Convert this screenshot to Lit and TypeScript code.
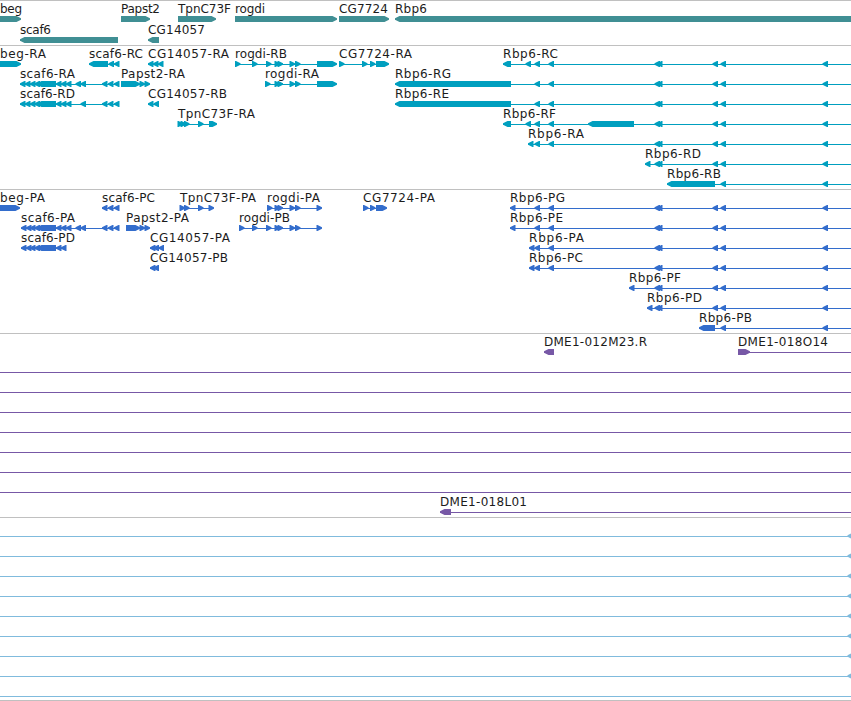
import { css, html, LitElement, svg } from 'lit';

import { customElement, property } from 'lit/decorators.js';

// [start, end] of a block, or a single tip position for a small arrow
type Block = [number, number] | number;

interface Feature {
  label?: string;
  x: number;
  width?: number;
  dir: 'left' | 'right';
  blocks: Block[];
  lineTo?: number;
}

interface Track {
  kind: string;
  rows: Feature[][];
}

const WIDTH = 851;
const HEAD = 5;

const left = (label: string, x: number, width: number, blocks: Block[], lineTo?: number): Feature =>
  ({ label, x, width, dir: 'left', blocks, lineTo });
const right = (label: string, x: number, width: number, blocks: Block[], lineTo?: number): Feature =>
  ({ label, x, width, dir: 'right', blocks, lineTo });
const line = (blocks: Block[] = []): Feature => ({ x: 0, dir: 'left', blocks, lineTo: WIDTH });

// exons shared by the Rbp6 isoforms
const far: Block[] = [712.5, 720.5, 822.5];
const tail: Block[] = [654.5, 657, ...far];

const scaf6: Block[] = [20, 25, 30, 34.5, [37, 56], 56, 61, 66];
const scaf6P: Block[] = [21, 26, 30, 34.5, [37, 56], 56, 61];

const tracks: Track[] = [
  {
    kind: 'gene',
    rows: [
      [
        right('beg', 0, 22, [[-5, 21]]),
        right('Papst2', 121, 39, [[121, 150]]),
        right('TpnC73F', 178, 53, [[178, 216]]),
        right('rogdi', 235, 30, [[235, 337]]),
        right('CG7724', 339, 49, [[339, 389]]),
        left('Rbp6', 395, 32, [[395, 860]]),
      ],
      [
        left('scaf6', 20, 31, [[20, 118]]),
        left('CG14057', 148, 57, [[148, 159]]),
      ],
    ],
  },
  {
    kind: 'transcript',
    rows: [
      [
        right('beg-RA', 0, 46, [[-5, 21]]),
        left('scaf6-RC', 89, 54, [[89, 108], 108.5, 114]),
        left('CG14057-RA', 148, 81, [148, 153, 158]),
        right('rogdi-RB', 235, 52, [240.5, 257.5, 271.5, 280, 283, 295, 300.5, [317, 337]]),
        right('CG7724-RA', 339, 73, [344.5, 367.5, 375.5, [376, 389]]),
        left('Rbp6-RC', 503, 55, [[503, 511], 525.5, 534.5, 548.5, ...tail], WIDTH),
      ],
      [
        left('scaf6-RA', 20, 55, [...scaf6, 75.5, 80.5, 102, 108, 114]),
        right('Papst2-RA', 121, 64, [[121, 140], 145, 150]),
        right('rogdi-RA', 265, 54, [270.5, 280, 283, 295, 300.5, [317, 337]]),
        left('Rbp6-RG', 395, 56, [[395, 511], 534.5, 548.5, ...tail], WIDTH),
      ],
      [
        left('scaf6-RD', 20, 55, [...scaf6, 80.5, 102, 108, 114]),
        left('CG14057-RB', 148, 79, [148, 153.5]),
        left('Rbp6-RE', 395, 54, [[395, 511], 534.5, 548.5, ...tail], WIDTH),
      ],
      [
        right('TpnC73F-RA', 178, 77, [183, 186, 189.5, 203.5, [209, 217]]),
        left('Rbp6-RF', 503, 53, [[503, 511], 525.5, 534.5, 548.5, [588, 634], ...tail], WIDTH),
      ],
      [left('Rbp6-RA', 528, 56, [528, 534.5, 548.5, ...tail], WIDTH)],
      [left('Rbp6-RD', 645, 56, [645, ...tail], WIDTH)],
      [left('Rbp6-RB', 667, 54, [[667, 715], 720.5, 822.5], WIDTH)],
    ],
  },
  {
    kind: 'protein',
    rows: [
      [
        right('beg-PA', 0, 45, [[-5, 20]]),
        left('scaf6-PC', 102, 53, [102, 108, 114]),
        right('TpnC73F-PA', 180, 76, [185, 189.5, 203.5, 214]),
        right('rogdi-PA', 267, 53, [272.5, 280, 283, 295, 300.5, 322]),
        right('CG7724-PA', 363, 72, [368.5, 375.5, [376, 387]]),
        left('Rbp6-PG', 510, 55, [510, 534.5, 548.5, ...tail], WIDTH),
      ],
      [
        left('scaf6-PA', 21, 54, [...scaf6P, 66, 75.5, 80.5, 102, 108, 114]),
        right('Papst2-PA', 126, 63, [[126, 140], 145, 150]),
        right('rogdi-PB', 239, 51, [244.5, 257.5, 271.5, 280, 283, 295, 300.5, 322]),
        left('Rbp6-PE', 510, 53, [510, 534.5, 548.5, ...tail], WIDTH),
      ],
      [
        left('scaf6-PD', 21, 54, scaf6P),
        left('CG14057-PA', 150, 80, [150, 153.5, 158.5]),
        left('Rbp6-PA', 529, 55, [529, 534.5, 548.5, ...tail], WIDTH),
      ],
      [
        left('CG14057-PB', 150, 78, [150, 153.5]),
        left('Rbp6-PC', 529, 54, [529, 534.5, 548.5, ...tail], WIDTH),
      ],
      [left('Rbp6-PF', 629, 52, [629, ...tail], WIDTH)],
      [left('Rbp6-PD', 647, 55, [647, ...tail], WIDTH)],
      [left('Rbp6-PB', 699, 53, [[699, 715], 720.5, 822.5], WIDTH)],
    ],
  },
  {
    kind: 'bac',
    rows: [
      [
        left('DME1-012M23.R', 544, 103, [[544, 554]]),
        right('DME1-018O14', 738, 90, [[738, 750]], WIDTH),
      ],
      ...Array.from({ length: 7 }, () => [line()]),
      [left('DME1-018L01', 440, 87, [[440, 451]], WIDTH)],
    ],
  },
  {
    kind: 'clone',
    rows: [
      ...Array.from({ length: 8 }, () => [line([847.5])]),
      [line()],
    ],
  },
];

@customElement('feature-row')
export class FeatureRow extends LitElement {
  static styles = css`
  :host {
    display: block;
    height: 20px;
  }

  svg {
    display: block;
    width: 100%;
    height: 20px;
  }

  text {
    font-family: "DejaVu Sans", sans-serif;
    font-size: 12px;
    fill: #1c1c1c;
  }

  .shape {
    fill: currentColor;
  }
  `;

  @property({ attribute: false })
  features: Feature[] = [];

  private span(block: Block, dir: string): [number, number] {
    if (typeof block !== 'number') {
      return block;
    }
    return dir === 'left' ? [block, block + HEAD + 0.5] : [block - HEAD - 0.5, block];
  }

  // the tip is blunt, two pixels high
  private block(block: Block, dir: string) {
    const [a, b] = this.span(block, dir);
    const points = dir === 'left'
      ? `${a},16.2 ${a + HEAD - 0.5},14 ${b},14 ${b},20 ${a + HEAD - 0.5},20 ${a},17.8`
      : `${a},14 ${b - HEAD + 0.5},14 ${b},16.2 ${b},17.8 ${b - HEAD + 0.5},20 ${a},20`;
    return svg`<polygon class="shape" points=${points}></polygon>`;
  }

  private feature(f: Feature) {
    const spans = f.blocks.map((b) => this.span(b, f.dir));
    const end = f.lineTo ?? Math.max(...spans.map((s) => s[1])) - 1;
    return svg`
      <rect class="shape" x=${f.x} y="17" width=${end - f.x} height="1"></rect>
      ${f.blocks.map((b) => this.block(b, f.dir))}
      ${f.label ? svg`<text x=${f.x} y="11" textLength=${f.width}>${f.label}</text>` : ''}
    `;
  }

  render() {
    return html`<svg>${this.features.map((f) => this.feature(f))}</svg>`;
  }
}

@customElement('app-root')
export class AppRoot extends LitElement {
  static styles = css`
  :host {
    display: block;
    width: 851px;
    height: 701px;
    box-sizing: border-box;
    overflow: hidden;
    background: #fff;
    border-bottom: 1px solid #c0c0c0;
  }

  .track {
    display: flex;
    flex-direction: column;
    border-top: 1px solid #c0c0c0;
    padding: 1px 0 2px;
  }

  .gene {
    color: #408f94;
    gap: 1px;
  }

  .transcript {
    color: #009fbf;
  }

  .protein {
    color: #336dcc;
  }

  .bac {
    color: #7758a6;
  }

  .clone {
    color: #80bbdd;
    padding-bottom: 1px;
  }
  `;

  render() {
    return tracks.map((track) => html`
      <section class="track ${track.kind}">
        ${track.rows.map((row) => html`<feature-row .features=${row}></feature-row>`)}
      </section>
    `);
  }
}
